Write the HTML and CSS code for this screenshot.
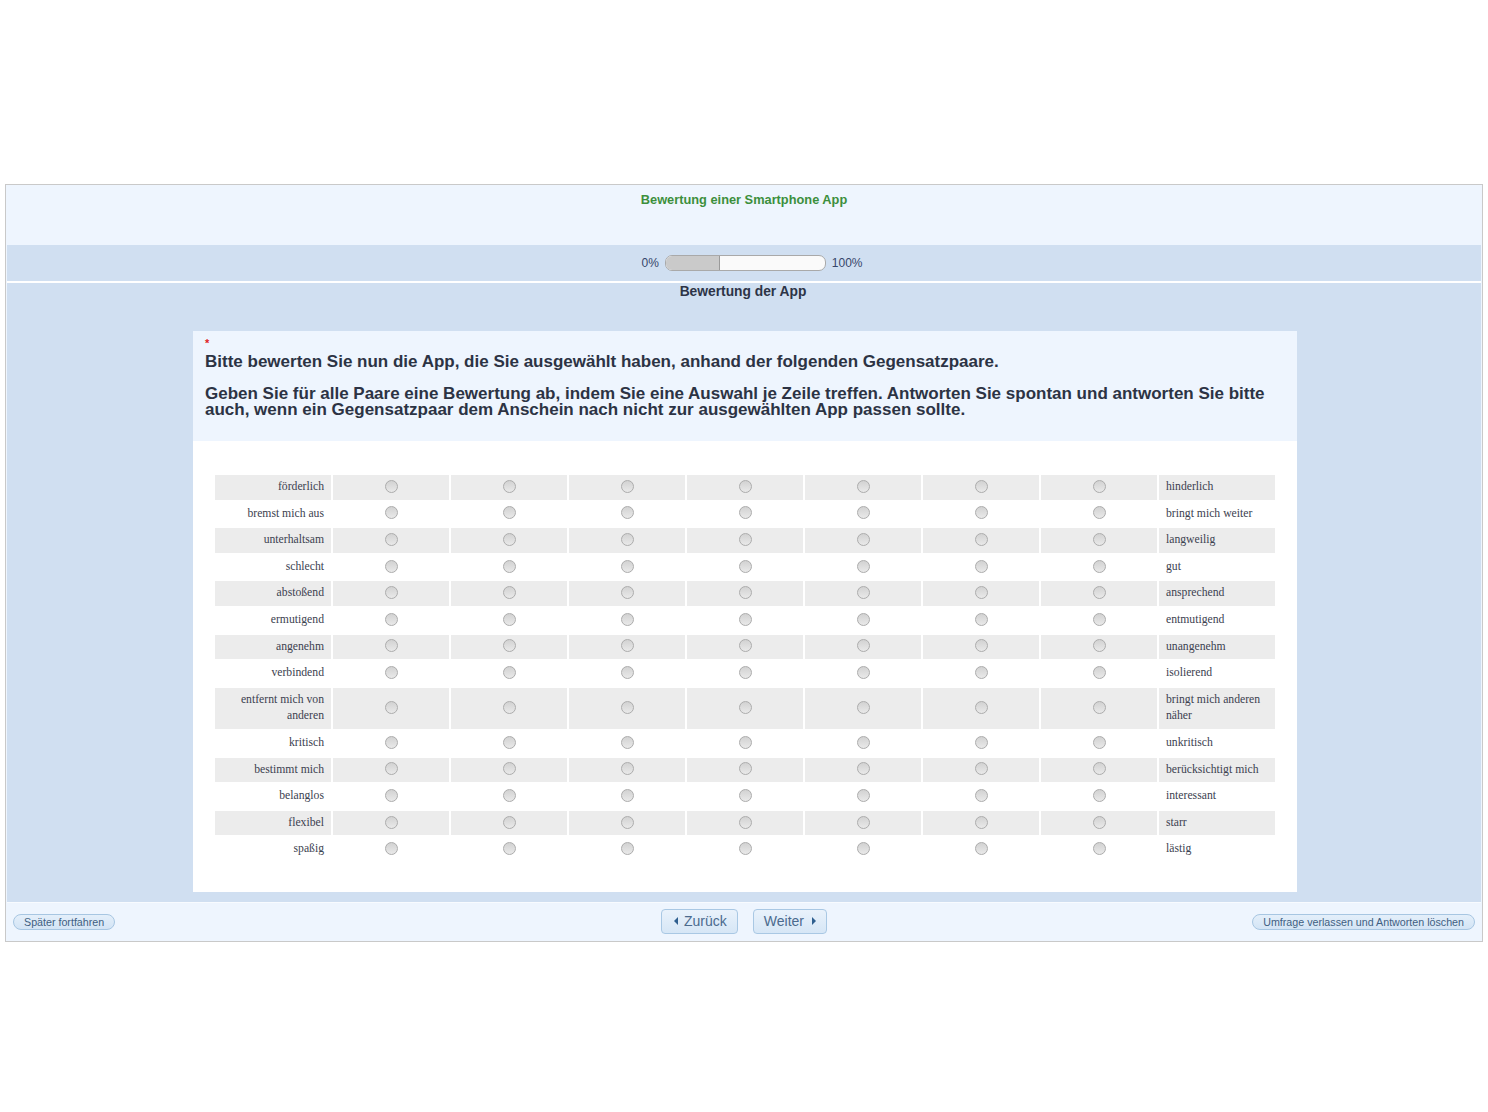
FILE: index.html
```html
<!DOCTYPE html>
<html lang="de">
<head>
<meta charset="utf-8">
<title>Bewertung einer Smartphone App</title>
<link rel="stylesheet" href="styles.css">
</head>
<body>
<div class="page">
  <div class="survey">
    <div class="survey-header">
      <div class="survey-title">Bewertung einer Smartphone App</div>
    </div>
    <div class="progress-band">
      <span class="pct">0%</span>
      <div class="bar"><div class="bar-fill"></div></div>
      <span class="pct">100%</span>
    </div>
    <div class="main">
      <div class="group-title">Bewertung der App</div>
      <div class="card">
        <div class="card-question">
          <div class="asterisk">*</div>
          <p class="qtext">Bitte bewerten Sie nun die App, die Sie ausgewählt haben, anhand der folgenden Gegensatzpaare.</p>
          <p class="qtext qtext-2">Geben Sie für alle Paare eine Bewertung ab, indem Sie eine Auswahl je Zeile treffen. Antworten Sie spontan und antworten Sie bitte auch, wenn ein Gegensatzpaar dem Anschein nach nicht zur ausgewählten App passen sollte.</p>
        </div>
        <div class="card-answers">
          <table class="scale">
            <tr class="odd"><td class="lab-l">förderlich</td><td><span class="radio"></span></td><td><span class="radio"></span></td><td><span class="radio"></span></td><td><span class="radio"></span></td><td><span class="radio"></span></td><td><span class="radio"></span></td><td><span class="radio"></span></td><td class="lab-r">hinderlich</td></tr>
            <tr class="even"><td class="lab-l">bremst mich aus</td><td><span class="radio"></span></td><td><span class="radio"></span></td><td><span class="radio"></span></td><td><span class="radio"></span></td><td><span class="radio"></span></td><td><span class="radio"></span></td><td><span class="radio"></span></td><td class="lab-r">bringt mich weiter</td></tr>
            <tr class="odd"><td class="lab-l">unterhaltsam</td><td><span class="radio"></span></td><td><span class="radio"></span></td><td><span class="radio"></span></td><td><span class="radio"></span></td><td><span class="radio"></span></td><td><span class="radio"></span></td><td><span class="radio"></span></td><td class="lab-r">langweilig</td></tr>
            <tr class="even"><td class="lab-l">schlecht</td><td><span class="radio"></span></td><td><span class="radio"></span></td><td><span class="radio"></span></td><td><span class="radio"></span></td><td><span class="radio"></span></td><td><span class="radio"></span></td><td><span class="radio"></span></td><td class="lab-r">gut</td></tr>
            <tr class="odd"><td class="lab-l">abstoßend</td><td><span class="radio"></span></td><td><span class="radio"></span></td><td><span class="radio"></span></td><td><span class="radio"></span></td><td><span class="radio"></span></td><td><span class="radio"></span></td><td><span class="radio"></span></td><td class="lab-r">ansprechend</td></tr>
            <tr class="even"><td class="lab-l">ermutigend</td><td><span class="radio"></span></td><td><span class="radio"></span></td><td><span class="radio"></span></td><td><span class="radio"></span></td><td><span class="radio"></span></td><td><span class="radio"></span></td><td><span class="radio"></span></td><td class="lab-r">entmutigend</td></tr>
            <tr class="odd"><td class="lab-l">angenehm</td><td><span class="radio"></span></td><td><span class="radio"></span></td><td><span class="radio"></span></td><td><span class="radio"></span></td><td><span class="radio"></span></td><td><span class="radio"></span></td><td><span class="radio"></span></td><td class="lab-r">unangenehm</td></tr>
            <tr class="even"><td class="lab-l">verbindend</td><td><span class="radio"></span></td><td><span class="radio"></span></td><td><span class="radio"></span></td><td><span class="radio"></span></td><td><span class="radio"></span></td><td><span class="radio"></span></td><td><span class="radio"></span></td><td class="lab-r">isolierend</td></tr>
            <tr class="odd"><td class="lab-l">entfernt mich von anderen</td><td><span class="radio"></span></td><td><span class="radio"></span></td><td><span class="radio"></span></td><td><span class="radio"></span></td><td><span class="radio"></span></td><td><span class="radio"></span></td><td><span class="radio"></span></td><td class="lab-r">bringt mich anderen näher</td></tr>
            <tr class="even"><td class="lab-l">kritisch</td><td><span class="radio"></span></td><td><span class="radio"></span></td><td><span class="radio"></span></td><td><span class="radio"></span></td><td><span class="radio"></span></td><td><span class="radio"></span></td><td><span class="radio"></span></td><td class="lab-r">unkritisch</td></tr>
            <tr class="odd"><td class="lab-l">bestimmt mich</td><td><span class="radio"></span></td><td><span class="radio"></span></td><td><span class="radio"></span></td><td><span class="radio"></span></td><td><span class="radio"></span></td><td><span class="radio"></span></td><td><span class="radio"></span></td><td class="lab-r">berücksichtigt mich</td></tr>
            <tr class="even"><td class="lab-l">belanglos</td><td><span class="radio"></span></td><td><span class="radio"></span></td><td><span class="radio"></span></td><td><span class="radio"></span></td><td><span class="radio"></span></td><td><span class="radio"></span></td><td><span class="radio"></span></td><td class="lab-r">interessant</td></tr>
            <tr class="odd"><td class="lab-l">flexibel</td><td><span class="radio"></span></td><td><span class="radio"></span></td><td><span class="radio"></span></td><td><span class="radio"></span></td><td><span class="radio"></span></td><td><span class="radio"></span></td><td><span class="radio"></span></td><td class="lab-r">starr</td></tr>
            <tr class="even"><td class="lab-l">spaßig</td><td><span class="radio"></span></td><td><span class="radio"></span></td><td><span class="radio"></span></td><td><span class="radio"></span></td><td><span class="radio"></span></td><td><span class="radio"></span></td><td><span class="radio"></span></td><td class="lab-r">lästig</td></tr>
          </table>
        </div>
      </div>
    </div>
    <div class="footer">
      <div class="footer-left"><button class="pill">Später fortfahren</button></div>
      <div class="footer-center">
        <button class="nav"><span class="tri tri-left"></span>Zurück</button>
        <button class="nav">Weiter<span class="tri tri-right"></span></button>
      </div>
      <div class="footer-right"><button class="pill">Umfrage verlassen und Antworten löschen</button></div>
    </div>
  </div>
</div>
</body>
</html>
```

FILE: styles.css
```css
html, body {
  margin: 0;
  padding: 0;
  background: #ffffff;
  font-family: "Liberation Sans", Arial, sans-serif;
}

.page {
  padding: 184px 5px 0 5px;
}

.survey {
  border: 1px solid #c9c9c9;
  padding: 0 1px;
  background: #eef5fe;
}

.survey-header {
  height: 60px;
  background: #eef5fe;
  text-align: center;
}

.survey-title {
  padding-top: 7px;
  font-size: 12.8px;
  font-weight: bold;
  color: #3c8f3c;
  line-height: 15px;
}

.progress-band {
  height: 36px;
  background: #d0dff1;
  display: flex;
  align-items: center;
  justify-content: center;
  gap: 6px;
  padding-left: 16px;
}

.pct {
  font-size: 12px;
  color: #36466a;
}

.bar {
  width: 159px;
  height: 14px;
  border: 1px solid #a9a9a9;
  border-radius: 7px;
  background: #fafafa;
  overflow: hidden;
  display: flex;
}

.bar-fill {
  width: 53px;
  background: #cacaca;
  border-right: 1px solid #9a9a9a;
}

.main {
  border-top: 2px solid #ffffff;
  background: #d0dff1;
  padding: 0 0 10px 2px;
  border-bottom: 1px solid #f8fbff;
}

.group-title {
  text-align: center;
  font-size: 13.8px;
  font-weight: bold;
  color: #2d3447;
  line-height: 16px;
  padding-top: 1px;
  height: 47px;
  margin-left: -4px;
}

.card {
  width: 1104px;
  margin: 0 auto;
  background: #ffffff;
}

.card-question {
  background: #eef5fe;
  padding: 8px 12px 23px 12px;
  color: #2c3344;
}

.asterisk {
  color: #e02020;
  font-size: 11px;
  line-height: 8px;
  height: 15px;
  font-weight: bold;
}

.qtext {
  margin: 0;
  font-size: 17px;
  font-weight: bold;
  line-height: 16px;
}

.qtext-2 {
  margin-top: 16px;
}

.card-answers {
  padding: 32px 20px 28px 20px;
}

.scale {
  width: 1064px;
  border-collapse: separate;
  border-spacing: 2px;
  font-family: "Liberation Serif", "Times New Roman", serif;
  font-size: 11.7px;
  color: #3c4250;
  table-layout: fixed;
}

.scale td {
  width: 102px;
  padding: 4px 7px;
  line-height: 16.6px;
  text-align: center;
  vertical-align: middle;
}

.scale tr.odd td {
  background: #ececec;
}

.scale td.lab-l {
  text-align: right;
}

.scale td.lab-r {
  text-align: left;
}

.radio {
  display: inline-block;
  width: 11px;
  height: 11px;
  border: 1px solid #acacac;
  border-radius: 50%;
  background: linear-gradient(#d2d2d2, #e9e9e9);
  vertical-align: middle;
  position: relative;
  top: -1px;
}

.footer {
  height: 38px;
  display: flex;
  align-items: center;
  justify-content: space-between;
  padding: 0 6px;
  background: #eef5fe;
}

.footer-left, .footer-right {
  flex: 1;
  display: flex;
}

.footer-right {
  justify-content: flex-end;
}

.footer-center {
  display: flex;
  gap: 15px;
}

.pill {
  font-family: "Liberation Sans", Arial, sans-serif;
  font-size: 10.7px;
  color: #3f5f82;
  height: 16px;
  padding: 0 10px;
  border: 1px solid #a7c6e2;
  border-radius: 8px;
  background: linear-gradient(#e4effa, #d3e4f5);
  line-height: 14px;
  margin-top: 1px;
}

.nav {
  font-family: "Liberation Sans", Arial, sans-serif;
  font-size: 14px;
  color: #4b6a8e;
  height: 25px;
  padding: 0 10px;
  border: 1px solid #a9c8e4;
  border-radius: 4px;
  background: linear-gradient(#e9f2fb, #d6e6f6);
  display: flex;
  align-items: center;
  gap: 6px;
  margin-top: -1px;
}

.tri {
  display: inline-block;
  width: 0;
  height: 0;
  border-top: 4px solid transparent;
  border-bottom: 4px solid transparent;
}

.tri-left {
  border-right: 4px solid #2f5f8f;
  margin-left: 2px;
}

.tri-right {
  border-left: 4px solid #2f5f8f;
  margin-left: 2px;
}
```
